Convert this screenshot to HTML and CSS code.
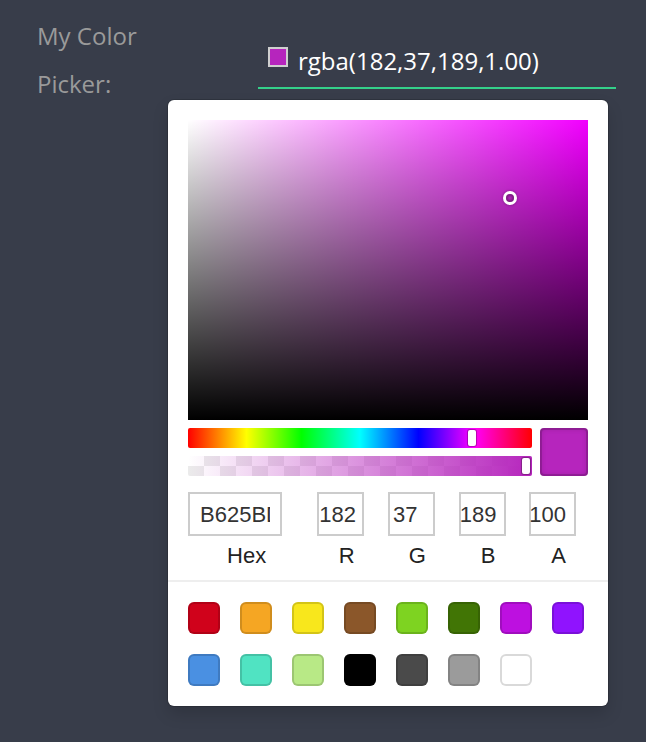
FILE: index.html
```html
<!DOCTYPE html>
<html lang="en">
<head>
<meta charset="utf-8">
<title>My Color Picker</title>
<link rel="stylesheet" href="styles.css">
</head>
<body>
<div class="page">
  <label class="title" for="color-value">My Color Picker:</label>
  <div class="field">
    <div class="field-row">
      <span class="field-swatch"></span>
      <span class="field-text" id="color-value">rgba(182,37,189,1.00)</span>
    </div>
    <div class="picker">
      <div class="saturation">
        <div class="sat-white"></div>
        <div class="sat-black"></div>
        <div class="sat-cursor" style="left: 80.4%; top: 25.9%;"></div>
      </div>
      <div class="controls">
        <div class="sliders">
          <div class="hue">
            <div class="hue-pointer" style="left: calc(82.5% - 4px);"></div>
          </div>
          <div class="alpha">
            <div class="alpha-fill"></div>
            <div class="alpha-pointer" style="left: calc(100% - 10px);"></div>
          </div>
        </div>
        <div class="preview"></div>
      </div>
      <div class="fields">
        <div class="col col-hex">
          <input class="inp inp-hex" type="text" value="B625BD" readonly>
          <div class="lbl">Hex</div>
        </div>
        <div class="col">
          <input class="inp inp-r" type="text" value="182" readonly>
          <div class="lbl">R</div>
        </div>
        <div class="col">
          <input class="inp inp-g" type="text" value="37" readonly>
          <div class="lbl">G</div>
        </div>
        <div class="col">
          <input class="inp inp-b" type="text" value="189" readonly>
          <div class="lbl">B</div>
        </div>
        <div class="col">
          <input class="inp inp-a" type="text" value="100" readonly>
          <div class="lbl">A</div>
        </div>
      </div>
      <div class="presets">
        <span class="sw" style="background:#d0021b"></span>
        <span class="sw" style="background:#f5a623"></span>
        <span class="sw" style="background:#f8e71c"></span>
        <span class="sw" style="background:#8b572a"></span>
        <span class="sw" style="background:#7ed321"></span>
        <span class="sw" style="background:#417505"></span>
        <span class="sw" style="background:#bd10e0"></span>
        <span class="sw" style="background:#9013fe"></span>
        <span class="sw" style="background:#4a90e2"></span>
        <span class="sw" style="background:#50e3c2"></span>
        <span class="sw" style="background:#b8e986"></span>
        <span class="sw" style="background:#000000"></span>
        <span class="sw" style="background:#4a4a4a"></span>
        <span class="sw" style="background:#9b9b9b"></span>
        <span class="sw" style="background:#ffffff"></span>
      </div>
    </div>
  </div>
</div>
</body>
</html>
```

FILE: styles.css
```css
html, body {
  margin: 0;
  padding: 0;
}
body {
  background: #383d4a;
  width: 646px;
  height: 742px;
  overflow: hidden;
}
.page {
  display: flex;
  align-items: flex-start;
  padding: 12px 0 0 37px;
}
.title {
  width: 221px;
  padding-right: 100px;
  box-sizing: border-box;
  font-family: "Open Sans", "Noto Sans", sans-serif;
  font-size: 24px;
  line-height: 48px;
  color: #9a9a9a;
}
.field {
  position: relative;
  width: 358px;
}
.field-row {
  display: flex;
  align-items: center;
  height: 30px;
  padding: 34px 0 11px 10px;
  border-bottom: 2px solid #34d08a;
}
.field-swatch {
  width: 20px;
  height: 20px;
  box-sizing: border-box;
  border: 2px solid #cfcfcf;
  background: rgb(182, 37, 189);
  margin-right: 10px;
  margin-bottom: 8px;
}
.field-text {
  font-family: "Open Sans", "Noto Sans", sans-serif;
  font-size: 24px;
  color: #ffffff;
  line-height: 30px;
}

/* Popover */
.picker {
  position: absolute;
  left: -90px;
  top: 88px;
  width: 440px;
  box-sizing: border-box;
  padding: 20px 20px 0;
  background: #ffffff;
  border-radius: 6px;
  box-shadow: 0 0 0 1px rgba(0, 0, 0, 0.15), 0 8px 16px rgba(0, 0, 0, 0.15);
  font-family: "Liberation Sans", Arial, sans-serif;
}
.saturation {
  position: relative;
  width: 400px;
  height: 300px;
  background: hsl(297, 100%, 50%);
}
.sat-white,
.sat-black {
  position: absolute;
  inset: 0;
}
.sat-white {
  background: linear-gradient(to right, #ffffff, rgba(255, 255, 255, 0));
}
.sat-black {
  background: linear-gradient(to top, #000000, rgba(0, 0, 0, 0));
}
.sat-cursor {
  position: absolute;
  width: 8px;
  height: 8px;
  border-radius: 50%;
  transform: translate(-4px, -4px);
  box-shadow: 0 0 0 3px #ffffff, inset 0 0 2px 2px rgba(0, 0, 0, 0.3), 0 0 2px 4px rgba(0, 0, 0, 0.15);
}
.controls {
  display: flex;
  gap: 8px;
  margin-top: 8px;
}
.sliders {
  flex: 1;
  display: flex;
  flex-direction: column;
  gap: 8px;
}
.hue,
.alpha {
  position: relative;
  height: 20px;
  border-radius: 2px;
}
.hue {
  background: linear-gradient(to right, #f00 0%, #ff0 17%, #0f0 33%, #0ff 50%, #00f 67%, #f0f 83%, #f00 100%);
}
.alpha {
  background-color: #ffffff;
  background-image: conic-gradient(#ebebeb 25%, #ffffff 0 50%, #ebebeb 0 75%, #ffffff 0);
  background-size: 32px 20px;
  overflow: hidden;
}
.alpha-fill {
  position: absolute;
  inset: 0;
  background: linear-gradient(to right, rgba(182, 37, 189, 0), rgb(182, 37, 189));
}
.hue-pointer,
.alpha-pointer {
  position: absolute;
  top: 2px;
  width: 8px;
  height: 16px;
  border-radius: 2px;
  background: #ffffff;
  box-shadow: 0 0 0 1px rgba(0, 0, 0, 0.2), 0 0 2px rgba(0, 0, 0, 0.3);
}
.preview {
  width: 48px;
  height: 48px;
  border-radius: 4px;
  background: rgb(182, 37, 189);
  box-shadow: inset 0 0 0 2px rgba(0, 0, 0, 0.15), inset 0 0 6px rgba(0, 0, 0, 0.2);
}
.fields {
  display: flex;
  padding-top: 16px;
}
.col {
  flex: 1;
  padding-left: 12px;
  min-width: 0;
}
.col-hex {
  flex: 2;
  padding-left: 0;
}
.inp {
  display: block;
  width: 80%;
  height: 44px;
  box-sizing: border-box;
  margin: 0;
  border: none;
  outline: none;
  box-shadow: inset 0 0 0 2px #cccccc;
  font-family: "Liberation Sans", Arial, sans-serif;
  font-size: 22px;
  color: #333333;
  background: #ffffff;
}
.inp-hex { padding: 2px 12px 0; }
.inp-r { padding: 2px 1px 0 2px; }
.inp-g { padding: 2px 4px 0 5px; }
.inp-b { padding: 2px 1px 0 1px; }
.inp-a { padding: 2px 0 0 0; }
.lbl {
  padding: 6px 0 10px;
  line-height: 28px;
  font-size: 22px;
  color: #222222;
  text-align: center;
}
.presets {
  display: flex;
  flex-wrap: wrap;
  margin: 0 -20px;
  padding: 20px 0 0 20px;
  border-top: 2px solid #eeeeee;
}
.sw {
  width: 32px;
  height: 32px;
  margin: 0 20px 20px 0;
  border-radius: 6px;
  box-shadow: inset 0 0 0 2px rgba(0, 0, 0, 0.15);
}
```
